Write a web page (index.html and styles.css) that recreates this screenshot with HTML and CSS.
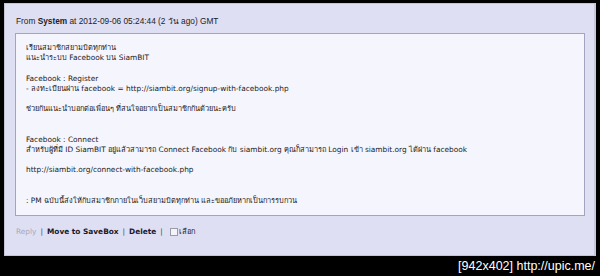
FILE: index.html
```html
<!DOCTYPE html>
<html>
<head>
<meta charset="utf-8">
<link rel="stylesheet" href="styles.css">
</head>
<body>
<div class="frame">
  <div class="panel">
    <div class="head">From <b>System</b> at 2012-09-06 05:24:44 (2 วัน ago) GMT</div>
    <div class="msg">
      <div class="line">เรียนสมาชิกสยามบิตทุกท่าน</div>
      <div class="line">แนะนำระบบ Facebook บน SiamBIT</div>
      <div class="line"></div>
      <div class="line">Facebook : Register</div>
      <div class="line">- ลงทะเบียนผ่าน facebook = http://siambit.org/signup-with-facebook.php</div>
      <div class="line"></div>
      <div class="line">ช่วยกันแนะนำบอกต่อเพื่อนๆ ที่สนใจอยากเป็นสมาชิกกันด้วยนะครับ</div>
      <div class="line"></div>
      <div class="line"></div>
      <div class="line">Facebook : Connect</div>
      <div class="line">สำหรับผู้ที่มี ID SiamBIT อยู่แล้วสามารถ Connect Facebook กับ siambit.org คุณก็สามารถ Login เข้า siambit.org ได้ผ่าน facebook</div>
      <div class="line"></div>
      <div class="line">http://siambit.org/connect-with-facebook.php</div>
      <div class="line"></div>
      <div class="line"></div>
      <div class="line">: PM ฉบับนี้ส่งให้กับสมาชิกภายในเว็บสยามบิตทุกท่าน และขออภัยหากเป็นการรบกวน</div>
    </div>
    <div class="actions">
      <span class="muted">Reply</span>
      <span class="sep">|</span>
      <b>Move to SaveBox</b>
      <span class="sep">|</span>
      <b>Delete</b>
      <span class="sep">|</span>
      <span class="box"></span>
      <span>เลือก</span>
    </div>
  </div>
  <div class="stamp">[942x402] http://upic.me/</div>
</div>
</body>
</html>
```
FILE: styles.css
```css
html, body {
  margin: 0;
  padding: 0;
  background: #000;
}
.frame {
  width: 600px;
  height: 276px;
  padding: 3px 4px 0 4px;
  box-sizing: border-box;
  display: flex;
  flex-direction: column;
}
.panel {
  height: 253px;
  box-sizing: border-box;
  background: #dfdff3;
  border: 1px solid #c4c4d6;
  border-right: 2px solid #c8c8dc;
  padding: 0 9px 0 10px;
  font-family: "DejaVu Sans", "Noto Sans", sans-serif;
  font-size: 7.4px;
  color: #222;
  display: flex;
  flex-direction: column;
}
.head {
  height: 29px;
  line-height: 10px;
  padding-top: 12px;
  padding-left: 1px;
  box-sizing: border-box;
  font-family: "Liberation Sans", "DejaVu Sans", sans-serif;
  font-size: 8.3px;
}
.msg {
  height: 183px;
  box-sizing: border-box;
  background: #f5f5fd;
  border: 1px solid #a4a4c0;
  padding: 9px 10px 0 10px;
}
.line {
  height: 10.2px;
  line-height: 10.2px;
  white-space: nowrap;
}
.actions {
  display: flex;
  align-items: center;
  gap: 4px;
  padding-top: 11px;
  padding-left: 1px;
  line-height: 10px;
}
.actions b {
  color: #1a1a2a;
}
.muted {
  color: #a8a8b8;
}
.sep {
  color: #444;
}
.box {
  width: 8px;
  height: 8px;
  box-sizing: border-box;
  border: 1px solid #9a9aa8;
  background: #f4f4f8;
  margin-left: 3px;
  margin-right: -3px;
}
.stamp {
  height: 20px;
  line-height: 20px;
  text-align: right;
  color: #fff;
  font-family: "Liberation Sans", sans-serif;
  font-size: 12.5px;
  padding-right: 1px;
}
```
